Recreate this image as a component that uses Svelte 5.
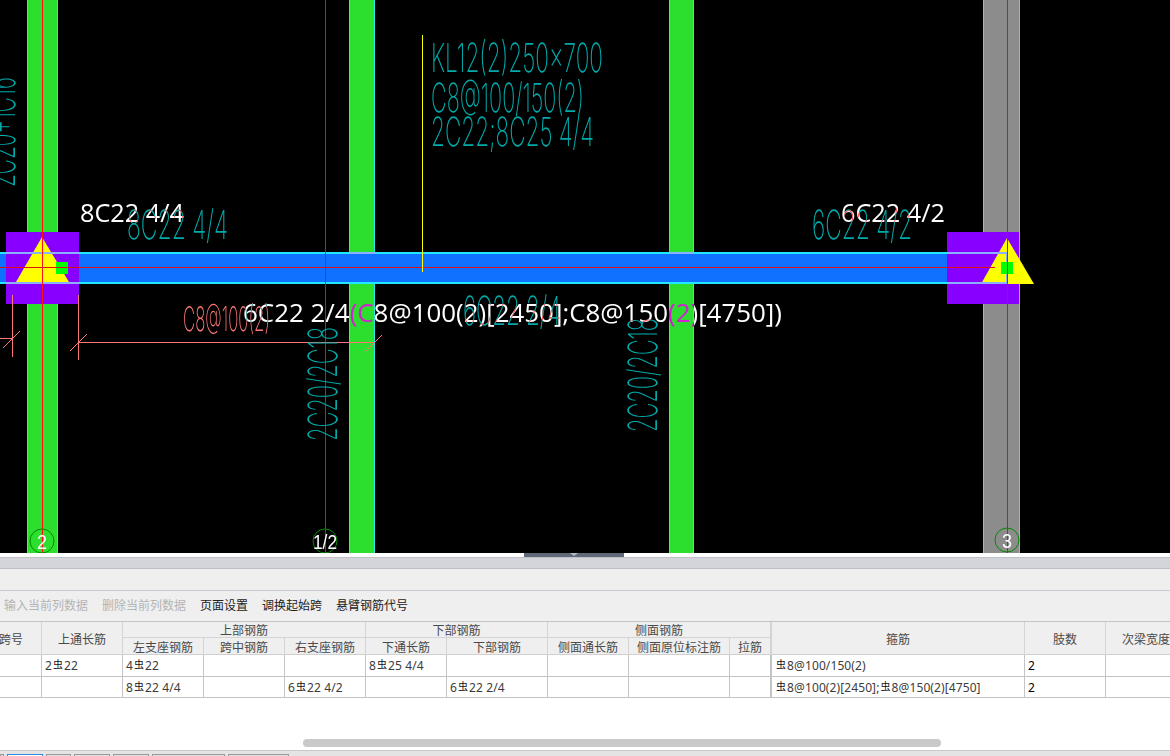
<script>
  const tools = [
    { t: '输入当前列数据', off: true },
    { t: '删除当前列数据', off: true },
    { t: '页面设置' },
    { t: '调换起始跨' },
    { t: '悬臂钢筋代号' }
  ];
  const tabs = [4, 36, 25, 36, 36, 73, 61];
  const columns = [
    { x: 27, w: 31, c: 'green' },
    { x: 349, w: 26, c: 'green' },
    { x: 669, w: 25, c: 'green' },
    { x: 983, w: 37, c: 'gray' }
  ];
  const subHeads = [
    ['左支座钢筋', 3], ['跨中钢筋', 4], ['右支座钢筋', 5], ['下通长筋', 6], ['下部钢筋', 7],
    ['侧面通长筋', 8], ['侧面原位标注筋', 9], ['拉筋', 10]
  ];
  const rows = [
    [[], [['2'], ['R'], ['22']], [['4'], ['R'], ['22']], [], [], [['8'], ['R'], ['25 4/4']], [], [], [], [],
      [['R'], ['8@100/150(2)']], [['2']], []],
    [[], [], [['8'], ['R'], ['22 4/4']], [], [['6'], ['R'], ['22 4/2']], [], [['6'], ['R'], ['22 2/4']], [], [], [],
      [['R'], ['8@100(2)[2450];'], ['R'], ['8@150(2)[4750]']], [['2']], []]
  ];
</script>

<div class="app">
  <svg class="canvas" width="1170" height="553" viewBox="0 0 1170 553">
    <rect width="1170" height="553" fill="#000" />

    {#each columns as col}
      <rect x={col.x} y="0" width={col.w} height="553" class={col.c} />
      <rect x={col.x} y="0" width="1" height="553" fill="#2ee6e6" />
      <rect x={col.x + col.w - 1} y="0" width="1" height="553" fill="#2ee6e6" />
    {/each}

    <rect x="0" y="252" width="1000" height="32" fill="#1070ff" />
    <rect x="0" y="252" width="1000" height="2" fill="#22e8ff" />
    <rect x="0" y="282" width="1000" height="2" fill="#22e8ff" />
    <rect x="349" y="252" width="26" height="2" fill="#8ab0ff" />
    <rect x="669" y="252" width="25" height="2" fill="#8ab0ff" />

    <rect x="6" y="232" width="73" height="72" fill="#8800ff" />
    <rect x="947" y="232" width="72" height="72" fill="#8800ff" />
    <rect x="6" y="252" width="73" height="2" fill="#8ab0ff" />
    <rect x="6" y="282" width="73" height="2" fill="#8ab0ff" />

    <polygon points="42,237 69,282 16,282" fill="#ffff00" />
    <rect x="30" y="252" width="25" height="2" fill="#8ab0ff" />
    <polygon points="1007,238 1034,284 981,284" fill="#ffff00" />
    <path d="M947 253H1007V283H947" fill="none" stroke="#8ab0ff" stroke-width="2" />
    <rect x="56" y="262" width="12" height="12" fill="#00ff00" />
    <rect x="1001" y="262" width="12" height="12" fill="#00ff00" />

    <!-- axis lines -->
    <rect x="42" y="0" width="1" height="553" fill="#ff1010" />
    <rect x="325" y="0" width="1" height="553" fill="#e01010" />
    <rect x="1007" y="0" width="1" height="553" fill="#e01010" />
    <rect x="0" y="267" width="995" height="1" fill="#e01010" />
    <rect x="422" y="35" width="1" height="237" fill="#ffff00" />

    <!-- dimension -->
    <g class="dim">
      <path d="M12.5 295V357M0 338.5H12.5M3 348L20 331" />
      <path d="M78.5 295V360M78 342.5H375M70 351L87 334M365 352L382 335" />
    </g>

    <!-- CAD labels -->
    <g class="cad">
      <text x="431" y="72" textLength="172" lengthAdjust="spacingAndGlyphs">KL12(2)250x700</text>
      <text x="431" y="112" textLength="153" lengthAdjust="spacingAndGlyphs">C8@100/150(2)</text>
      <text x="431" y="146" textLength="163" lengthAdjust="spacingAndGlyphs">2C22;8C25 4/4</text>
      <text x="127" y="239" textLength="101" lengthAdjust="spacingAndGlyphs">8C22 4/4</text>
      <text x="812" y="239" textLength="100" lengthAdjust="spacingAndGlyphs">6C22 4/2</text>
      <text x="463" y="325" textLength="98" lengthAdjust="spacingAndGlyphs">6C22 2/4</text>
      <text transform="translate(15 187) rotate(-90)" textLength="110" lengthAdjust="spacingAndGlyphs">2C20+1C16</text>
      <text transform="translate(337 441) rotate(-90)" textLength="114" lengthAdjust="spacingAndGlyphs">2C20/2C18</text>
      <text transform="translate(657 432) rotate(-90)" textLength="114" lengthAdjust="spacingAndGlyphs">2C20/2C18</text>
      <text class="pink" x="183" y="331" textLength="87" lengthAdjust="spacingAndGlyphs">C8@100(2)</text>
    </g>

    <!-- axis bubbles -->
    <g class="bubble">
      <circle cx="42" cy="541" r="12" />
      <circle cx="325" cy="541" r="12" />
      <circle cx="1007" cy="540" r="12" />
    </g>
    <g class="bubtext">
      <text x="42" y="549" textLength="10" lengthAdjust="spacingAndGlyphs">2</text>
      <text x="325" y="549" textLength="24" lengthAdjust="spacingAndGlyphs">1/2</text>
      <text x="1007" y="548" textLength="10" lengthAdjust="spacingAndGlyphs">3</text>
    </g>

    <!-- XOR-drawn annotations -->
    <g class="xor">
      <text x="80" y="222" textLength="104" lengthAdjust="spacingAndGlyphs">8C22 4/4</text>
      <text x="841" y="222" textLength="104" lengthAdjust="spacingAndGlyphs">6C22 4/2</text>
      <text x="243" y="322" textLength="539" lengthAdjust="spacingAndGlyphs">6C22 2/4(C8@100(2)[2450];C8@150(2)[4750])</text>
    </g>
  </svg>

  <div class="grip"><div class="handle"></div></div>
  <div class="strip"></div>
  <div class="bar1"></div>
  <div class="bar2">
    {#each tools as tool}
      <span class:off={tool.off}>{tool.t}</span>
    {/each}
  </div>

  <div class="grid head">
    <div class="hc tall first">跨号</div>
    <div class="hc tall c2">上通长筋</div>
    <div class="hc group g1">上部钢筋</div>
    <div class="hc group g2">下部钢筋</div>
    <div class="hc group g3">侧面钢筋</div>
    <div class="hc tall c11">箍筋</div>
    <div class="hc tall c12">肢数</div>
    <div class="hc tall c13">次梁宽度</div>
    {#each subHeads as [label, col]}
      <div class="hc sub" style="grid-column: {col}; grid-row: 2;">{label}</div>
    {/each}
  </div>

  {#each rows as row, i}
    <div class="grid data" class:second={i === 1}>
      {#each row as cell}
        <div class="td">
          {#each cell as [part]}
            {#if part === 'R'}<span class="rb">虫</span>{:else}{part}{/if}
          {/each}
        </div>
      {/each}
    </div>
  {/each}

  <div class="blank"><div class="thumb"></div></div>

  <div class="tabs">
    {#each tabs as w, i}
      <div class="tab" class:active={i === 1} style="width: {w}px"></div>
    {/each}
  </div>
</div>

<style>
  :global(body) {
    margin: 0;
    background: #fff;
  }
  .app {
    width: 1170px;
    height: 756px;
    overflow: hidden;
    display: flex;
    flex-direction: column;
    font-family: "Noto Sans CJK SC", "Noto Sans", sans-serif;
    font-size: 12px;
    color: #444;
    background: #fff;
  }
  .canvas {
    display: block;
    flex: none;
  }
  .green {
    fill: #2cdf2e;
  }
  .gray {
    fill: #8c8c8c;
  }
  .dim path {
    fill: none;
    stroke: #ff7878;
    stroke-width: 1;
  }
  .cad text {
    font-family: Inter, "Liberation Sans", sans-serif;
    font-weight: 150;
    font-size: 40px;
    fill: #00aaaa;
  }
  .cad text.pink {
    font-size: 34px;
    fill: #ff7878;
  }
  .bubble circle {
    fill: none;
    stroke: #008a00;
    stroke-width: 1;
  }
  .bubtext text {
    font-family: "Liberation Sans", sans-serif;
    font-size: 20px;
    fill: #fff;
    text-anchor: middle;
  }
  .xor {
    mix-blend-mode: difference;
  }
  .xor text {
    font-family: "Open Sans", "Noto Sans", sans-serif;
    font-size: 25px;
    fill: #fff;
  }
  .grip {
    height: 4px;
    flex: none;
    background: #fff;
  }
  .handle {
    position: relative;
    margin-left: 524px;
    width: 100px;
    height: 4px;
    background: #5e6a78;
  }
  .handle::after {
    content: "";
    position: absolute;
    left: 46px;
    top: 0;
    border-left: 4px solid transparent;
    border-right: 4px solid transparent;
    border-top: 3px solid #b8bcc2;
  }
  .strip {
    height: 12px;
    flex: none;
    box-sizing: border-box;
    background: #d4d5da;
    border-top: 1px solid #c0c1c8;
    border-bottom: 1px solid #c0c1c8;
  }
  .bar1 {
    height: 22px;
    flex: none;
    box-sizing: border-box;
    background: #efeff0;
    border-bottom: 1px solid #c8c8d0;
  }
  .bar2 {
    height: 30px;
    flex: none;
    box-sizing: border-box;
    background: #efeff0;
    display: flex;
    align-items: center;
    gap: 14px;
    padding-left: 4px;
    padding-bottom: 3px;
    color: #222;
  }
  .bar2 .off {
    color: #b4b4b4;
  }
  .grid {
    display: grid;
    grid-template-columns: 42px 81px 81px 81px 81px 81px 101px 81px 101px 41px 254px 81px 65px;
    flex: none;
  }
  .head {
    grid-template-rows: 16px 17px;
    height: 34px;
    box-sizing: border-box;
    background: #efeff0;
    border-top: 1px solid #c4c4c4;
    border-bottom: 1px solid #d0d0d0;
  }
  .hc {
    display: flex;
    align-items: center;
    justify-content: center;
    box-sizing: border-box;
    border-right: 1px solid #d4d4d4;
    line-height: 1;
    color: #4a4a4a;
    overflow: hidden;
    white-space: nowrap;
  }
  .tall {
    grid-row: 1 / span 2;
  }
  .first {
    grid-column: 1;
    justify-content: flex-end;
    padding-right: 18px;
  }
  .c2 { grid-column: 2; }
  .c11 { grid-column: 11; border-left: 1px solid #d4d4d4; }
  .c12 { grid-column: 12; }
  .c13 { grid-column: 13; border-right: none; justify-content: flex-start; padding-left: 16px; }
  .group {
    grid-row: 1;
    border-bottom: 1px solid #d4d4d4;
    padding-top: 1px;
  }
  .g1 { grid-column: 3 / span 3; }
  .g2 { grid-column: 6 / span 2; }
  .g3 { grid-column: 8 / span 3; }
  .sub {
    padding-top: 1px;
  }
  .data {
    height: 22px;
    box-sizing: border-box;
    border-bottom: 1px solid #c4c4c6;
    background: #fff;
  }
  .data.second {
    height: 21px;
  }
  .td {
    box-sizing: border-box;
    border-right: 1px solid #c4c4c6;
    padding-left: 3px;
    padding-top: 1px;
    font-family: "Noto Sans", "Noto Sans CJK SC", sans-serif;
    font-size: 12px;
    letter-spacing: 0.1px;
    line-height: 20px;
    color: #3c3c3c;
    white-space: nowrap;
    overflow: hidden;
  }
  .td:nth-child(11) {
    border-left: 1px solid #c4c4c6;
  }
  .td:nth-child(12) {
    color: #000;
  }
  .rb {
    font-family: "Noto Sans CJK SC", sans-serif;
    font-size: 10px;
    position: relative;
    top: -2px;
    color: #111;
    margin: 0 1px;
  }
  .blank {
    flex: 1;
    min-height: 0;
    background: #fff;
    padding-top: 41px;
    box-sizing: border-box;
  }
  .thumb {
    margin-left: 303px;
    width: 638px;
    height: 8px;
    border-radius: 4px;
    background: #c9c9c9;
  }
  .tabs {
    height: 6px;
    flex: none;
    box-sizing: border-box;
    border-top: 1px solid #c8c8c8;
    background: #e4e4e4;
    padding-top: 3px;
    display: flex;
    gap: 3px;
  }
  .tab {
    flex: none;
    height: 4px;
    box-sizing: border-box;
    border: 1px solid #9a9a9a;
    background: #e0e0e0;
  }
  .tab.active {
    border-color: #2a8ae0;
    background: #fff;
  }
</style>
